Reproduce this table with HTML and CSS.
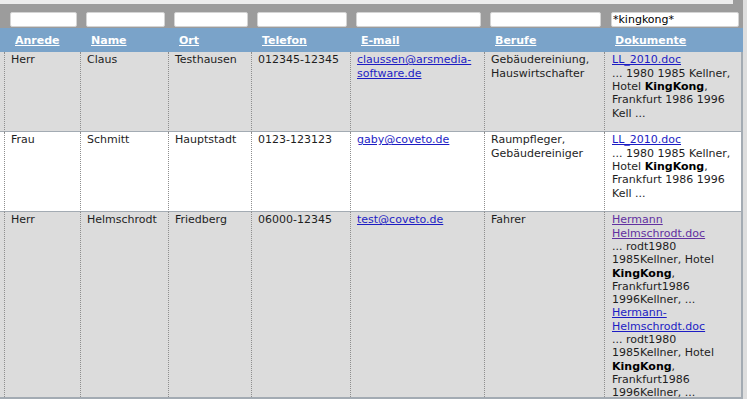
FILE: index.html
```html
<!DOCTYPE html>
<html lang="de">
<head>
<meta charset="utf-8">
<title>Bewerber</title>
<link rel="stylesheet" href="styles.css">
</head>
<body>
<div class="grid">
  <div class="grid-top"></div>
  <table class="results">
    <colgroup>
      <col class="c-edge">
      <col class="c-anrede">
      <col class="c-name">
      <col class="c-ort">
      <col class="c-tel">
      <col class="c-mail">
      <col class="c-beruf">
      <col class="c-doc">
    </colgroup>
    <thead>
      <tr class="filters">
        <td class="edge"></td>
        <td><input type="text"></td>
        <td><input type="text"></td>
        <td><input type="text"></td>
        <td><input type="text"></td>
        <td><input type="text"></td>
        <td><input type="text"></td>
        <td class="last"><input type="text" value="*kingkong*"></td>
      </tr>
      <tr class="head">
        <th class="edge"></th>
        <th><a href="#">Anrede</a></th>
        <th><a href="#">Name</a></th>
        <th><a href="#">Ort</a></th>
        <th><a href="#">Telefon</a></th>
        <th><a href="#">E-mail</a></th>
        <th><a href="#">Berufe</a></th>
        <th><a href="#">Dokumente</a></th>
      </tr>
    </thead>
    <tbody>
      <tr class="alt sep">
        <td class="edge"></td>
        <td>Herr</td>
        <td>Claus</td>
        <td>Testhausen</td>
        <td>012345-12345</td>
        <td><a href="#">claussen@arsmedia-software.de</a></td>
        <td>Gebäudereiniung, Hauswirtschafter</td>
        <td class="last">
          <a href="#">LL_2010.doc</a>
          <div>... 1980 1985 Kellner, Hotel <b>KingKong</b>, Frankfurt 1986 1996 Kell ...</div>
        </td>
      </tr>
      <tr class="sep">
        <td class="edge"></td>
        <td>Frau</td>
        <td>Schmitt</td>
        <td>Hauptstadt</td>
        <td>0123-123123</td>
        <td><a href="#">gaby@coveto.de</a></td>
        <td>Raumpfleger, Gebäudereiniger</td>
        <td class="last">
          <a href="#">LL_2010.doc</a>
          <div>... 1980 1985 Kellner, Hotel <b>KingKong</b>, Frankfurt 1986 1996 Kell ...</div>
        </td>
      </tr>
      <tr class="alt">
        <td class="edge"></td>
        <td>Herr</td>
        <td>Helmschrodt</td>
        <td>Friedberg</td>
        <td>06000-12345</td>
        <td><a href="#">test@coveto.de</a></td>
        <td>Fahrer</td>
        <td class="last">
          <a href="#" class="visited">Hermann Helmschrodt.doc</a>
          <div>... rodt1980 1985Kellner, Hotel <b>KingKong</b>, Frankfurt1986 1996Kellner, ...</div>
          <a href="#">Hermann-Helmschrodt.doc</a>
          <div>... rodt1980 1985Kellner, Hotel <b>KingKong</b>, Frankfurt1986 1996Kellner, ...</div>
        </td>
      </tr>
    </tbody>
  </table>
</div>
</body>
</html>
```
FILE: styles.css
```css
html, body {
  margin: 0;
  padding: 0;
  background: #dedede;
}

body {
  font-family: "DejaVu Sans", Verdana, sans-serif;
  font-size: 11px;
  color: #1e1e1e;
}

.grid {
  box-sizing: border-box;
  width: 743px;
  height: 399px;
  overflow: hidden;
  background: #9c9c9c;
  border-bottom: 2px solid #a3abb3;
}

.grid-top {
  height: 4px;
  margin-right: 10px;
  background: #ececec;
}

.results {
  width: 743px;
  table-layout: fixed;
  border-collapse: separate;
  border-spacing: 0;
}

.c-edge { width: 4px; }
.c-anrede { width: 76px; }
.c-name { width: 88px; }
.c-ort { width: 83px; }
.c-tel { width: 99px; }
.c-mail { width: 134px; }
.c-beruf { width: 120px; }
.c-doc { width: 139px; }

.filters td {
  padding: 8px 3px 1px 6px;
  background: #9c9c9c;
}

.filters td.last {
  padding-left: 7px;
  padding-right: 4px;
}

.filters td.edge {
  padding: 0;
}

.filters input {
  display: block;
  box-sizing: border-box;
  width: 100%;
  height: 15px;
  margin: 0;
  padding: 0 1px;
  border: 1px solid #d4d4d4;
  border-radius: 2px;
  background: #ffffff;
  font-family: "DejaVu Sans", Verdana, sans-serif;
  font-size: 11px;
  line-height: 13px;
  color: #000;
}

.head th {
  background: #7aa3c9;
  text-align: left;
  font-weight: bold;
  line-height: 13.4px;
  padding: 6px 4px 5px 11px;
  white-space: nowrap;
}

.head th.edge {
  padding: 0;
}

.head a {
  color: #ffffff;
  text-decoration: underline;
}

tbody td {
  vertical-align: top;
  line-height: 13.3px;
  padding: 1px 4px 11.5px 6px;
  border-left: 1px dotted #8e8e8e;
  background: #ffffff;
}

tbody tr.alt td {
  background: #dcdcdc;
}

tbody tr.sep td {
  border-bottom: 1px solid #a3abb3;
}

tbody td.edge {
  padding: 0;
  border-left: none;
}

tbody td.last {
  padding-left: 7px;
  border-right: 2px solid #a3abb3;
}

tbody a {
  color: #1c1cc4;
  text-decoration: underline;
}

tbody a.visited {
  color: #6230a0;
}

tbody td.last a {
  display: block;
}

tbody b {
  color: #000;
}
```
